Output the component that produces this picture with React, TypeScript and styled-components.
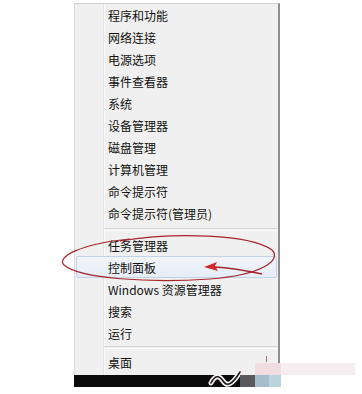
import styled, { createGlobalStyle } from "styled-components";

const GlobalStyle = createGlobalStyle`
  html, body {
    margin: 0;
    padding: 0;
    background: #ffffff;
  }
  body {
    font-family: "Noto Sans CJK SC", "Liberation Sans", sans-serif;
  }
`;

const Page = styled.div`
  position: relative;
  width: 362px;
  height: 394px;
  overflow: hidden;
  background: #ffffff;
  padding-top: 3px;
  box-sizing: border-box;
`;

// Context menu
const Menu = styled.ul`
  list-style: none;
  margin: 0 0 0 74px;
  padding: 0;
  width: 206px;
  height: 372px;
  box-sizing: border-box;
  display: flex;
  flex-direction: column;
  border-top: 1px solid #cfcfcf;
  border-left: 1px solid #dcdcdc;
  border-right: 2px solid #8e8e8e;
  background: linear-gradient(
    to right,
    #f0f0f0 28px,
    #e3e3e3 28px,
    #e3e3e3 29px,
    #fbfbfb 29px,
    #fbfbfb 30px,
    #f0f0f0 30px
  );
`;

const Item = styled.li<{ $active?: boolean }>`
  height: 22px;
  display: flex;
  align-items: center;
  padding-left: 31px;
  margin: 0 1px;
  box-sizing: border-box;
  font-size: 12px;
  color: #111111;
  white-space: nowrap;
  border: 1px solid ${(p) => (p.$active ? "#c3d3e6" : "transparent")};
  border-radius: 2px;
  background: ${(p) =>
    p.$active ? "linear-gradient(#f1f5fa, #e6edf6)" : "transparent"};
`;

const Separator = styled.li<{ $h: number }>`
  height: ${(p) => p.$h}px;
  display: flex;
  align-items: center;
  padding-left: 29px;

  &::after {
    content: "";
    flex: 1;
    height: 1px;
    border-top: 1px solid #d6d6d6;
    border-bottom: 1px solid #fcfcfc;
  }
`;

// Taskbar strip under the menu
const Taskbar = styled.div`
  display: flex;
  height: 12px;
  margin-left: 74px;
`;

const Segment = styled.div<{ $w: number; $bg: string }>`
  width: ${(p) => p.$w}px;
  background: ${(p) => p.$bg};
  position: relative;
`;

const Swoosh = styled.svg`
  position: absolute;
  left: 134px;
  top: -8px;
`;

// Watermark blocks over the bottom right corner
const Watermark = styled.div`
  position: absolute;
  left: 255px;
  top: 363px;
  display: flex;
  height: 12px;
`;

const Blot = styled.div<{ $w: number; $bg: string }>`
  width: ${(p) => p.$w}px;
  background: ${(p) => p.$bg};
`;

const Tick = styled.div`
  position: absolute;
  left: 266px;
  top: 356px;
  width: 1px;
  height: 6px;
  background: #b07070;
`;

// Red annotation
const Annotation = styled.svg`
  position: absolute;
  left: 0;
  top: 0;
  pointer-events: none;
`;

const top = [
  "程序和功能",
  "网络连接",
  "电源选项",
  "事件查看器",
  "系统",
  "设备管理器",
  "磁盘管理",
  "计算机管理",
  "命令提示符",
  "命令提示符(管理员)",
];

const middle = ["任务管理器", "控制面板", "Windows 资源管理器", "搜索", "运行"];

export default function App() {
  return (
    <>
      <GlobalStyle />
      <Page>
        <Menu>
          {top.map((t) => (
            <Item key={t}>{t}</Item>
          ))}
          <Separator $h={10} />
          {middle.map((t) => (
            <Item key={t} $active={t === "控制面板"}>
              {t}
            </Item>
          ))}
          <Separator $h={7} />
          <Item>桌面</Item>
        </Menu>
        <Taskbar>
          <Segment $w={166} $bg="#0b0b0b">
            <Swoosh width="36" height="22" viewBox="0 0 36 22">
              <path
                d="M3 16 C7 8, 11 8, 15 14 S24 18, 32 5"
                fill="none"
                stroke="#f4f0f4"
                strokeWidth="5"
                strokeLinecap="round"
              />
              <path
                d="M3 16 C7 8, 11 8, 15 14 S24 18, 32 5"
                fill="none"
                stroke="#1a1a1a"
                strokeWidth="1.6"
                strokeLinecap="round"
              />
            </Swoosh>
          </Segment>
          <Segment $w={15} $bg="#5a5a5e" />
          <Segment $w={14} $bg="#a6becb" />
          <Segment $w={12} $bg="#b9d4e0" />
        </Taskbar>
        <Watermark>
          <Blot $w={26} $bg="#f1dde1" />
          <Blot $w={74} $bg="#f6eef1" />
        </Watermark>
        <Tick />
        <Annotation width="362" height="394" viewBox="0 0 362 394">
          <path
            d="M120 241 C175 232, 250 234, 272 250 C282 260, 262 275, 210 279 C150 283, 80 279, 64 265 C56 257, 80 244, 130 239"
            fill="none"
            stroke="#a5262c"
            strokeWidth="1.2"
          />
          <path
            d="M214 267 C232 268, 248 271, 262 274"
            fill="none"
            stroke="#a5262c"
            strokeWidth="1.3"
          />
          <path d="M204 267 L217 262 L215 266 L218 271 Z" fill="#d4262c" />
        </Annotation>
      </Page>
    </>
  );
}
